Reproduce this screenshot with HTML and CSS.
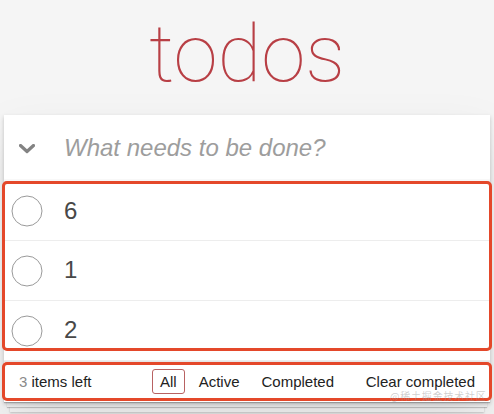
FILE: index.html
```html
<!DOCTYPE html>
<html lang="en">
<head>
<meta charset="utf-8">
<title>todos</title>
<link rel="stylesheet" href="styles.css">
</head>
<body>
<div class="page">
  <h1 class="title">todos</h1>
  <section class="todoapp">
    <header class="new-row">
      <span class="toggle-all">
        <svg width="16" height="10" viewBox="0 0 16 10"><polyline points="1.5,1.5 8,7.5 14.5,1.5" fill="none" stroke="#838383" stroke-width="3.2" stroke-linecap="round" stroke-linejoin="round"/></svg>
      </span>
      <div class="new-todo">What needs to be done?</div>
    </header>
    <ul class="todo-list">
      <li class="todo">
        <span class="toggle"><svg width="32" height="32" viewBox="0 0 32 32"><circle cx="16" cy="16" r="15" fill="none" stroke="#9a9a9a" stroke-width="1"/></svg></span>
        <label class="todo-label">6</label>
      </li>
      <li class="todo">
        <span class="toggle"><svg width="32" height="32" viewBox="0 0 32 32"><circle cx="16" cy="16" r="15" fill="none" stroke="#9a9a9a" stroke-width="1"/></svg></span>
        <label class="todo-label">1</label>
      </li>
      <li class="todo">
        <span class="toggle"><svg width="32" height="32" viewBox="0 0 32 32"><circle cx="16" cy="16" r="15" fill="none" stroke="#9a9a9a" stroke-width="1"/></svg></span>
        <label class="todo-label">2</label>
      </li>
    </ul>
    <footer class="footer">
      <span class="todo-count"><strong class="count-num">3</strong> items left</span>
      <ul class="filters">
        <li><a class="filter selected">All</a></li>
        <li><a class="filter">Active</a></li>
        <li><a class="filter">Completed</a></li>
      </ul>
      <span class="clear-completed">Clear completed</span>
    </footer>
  </section>
  <div class="annot annot-list"></div>
  <div class="annot annot-footer"></div>
  <div class="watermark">@稀土掘金技术社区</div>
</div>
</body>
</html>
```

FILE: styles.css
```css
html, body {
  margin: 0;
  padding: 0;
}
body {
  background: #f5f5f5;
  font-family: "Liberation Sans", Arial, sans-serif;
  color: #4d4d4d;
}
.page {
  position: relative;
  padding: 0 4px;
  height: 414px;
  overflow: hidden;
}
.title {
  margin: 14px 0 21px;
  font-family: Roboto, "Liberation Sans", sans-serif;
  font-weight: 100;
  font-size: 80px;
  line-height: 80px;
  text-align: center;
  color: #b83f45;
}
.todoapp {
  position: relative;
  background: #fff;
  box-shadow: 0 2px 4px rgba(0,0,0,0.2), 0 25px 50px rgba(0,0,0,0.1);
}
.new-row {
  display: flex;
  align-items: center;
  box-shadow: inset 0 -2px 1px rgba(0,0,0,0.03);
}
.toggle-all {
  width: 60px;
  display: flex;
  justify-content: flex-start;
  padding-left: 15px;
  box-sizing: border-box;
}
.toggle-all svg { display: block; margin-top: 2px; }
.new-todo {
  flex: 1;
  padding: 16px 16px 16px 0;
  font-size: 24px;
  line-height: 1.4em;
  font-style: italic;
  color: #9d9d9d;
}
.todo-list {
  list-style: none;
  margin: 0;
  padding: 0;
  border-top: 1px solid #e6e6e6;
}
.todo {
  display: flex;
  align-items: center;
  border-bottom: 1px solid #ededed;
}
.toggle {
  width: 60px;
  display: flex;
  padding-left: 7px;
  box-sizing: border-box;
}
.toggle svg { display: block; }
.todo-label {
  padding: 15px 15px 15px 0;
  font-size: 24px;
  line-height: 1.2;
  color: #484848;
}
.footer {
  position: relative;
  display: grid;
  grid-template-columns: 1fr auto 1fr;
  grid-template-rows: 20px;
  align-items: center;
  height: 20px;
  padding: 10px 15px;
  border-top: 1px solid #e6e6e6;
  font-size: 15px;
  line-height: 20px;
  color: #222;
}
.footer::before {
  content: '';
  position: absolute;
  right: 0;
  bottom: 0;
  left: 0;
  height: 40px;
  overflow: hidden;
  box-shadow: 0 1px 1px rgba(0,0,0,0.2),
              0 8px 0 -3px #f6f6f6,
              0 9px 1px -3px rgba(0,0,0,0.2),
              0 16px 0 -6px #f6f6f6,
              0 17px 2px -6px rgba(0,0,0,0.2);
  z-index: -1;
}
.todo-count { justify-self: start; }
.count-num { font-weight: normal; color: #8a8a8a; }
.filters {
  list-style: none;
  margin: 0;
  padding: 0;
  display: flex;
  align-items: center;
  height: 20px;
}
.filter {
  display: block;
  margin: 0 3px;
  padding: 3px 7px;
  border: 1px solid transparent;
  border-radius: 3px;
  line-height: 17px;
}
.filter.selected { border-color: #b86262; }
.clear-completed { justify-self: end; }
.annot {
  position: absolute;
  left: 2px;
  width: 484px;
  border: 3px solid #e4482a;
  border-radius: 5px;
  pointer-events: none;
}
.annot-list { top: 181px; height: 164px; }
.annot-footer { top: 362px; height: 33px; }
.watermark {
  position: absolute;
  left: 390px;
  top: 391px;
  font-family: "Noto Sans CJK SC", sans-serif;
  font-size: 10px;
  line-height: 10px;
  color: rgba(150,150,150,0.45);
  letter-spacing: 0.8px;
}
```
